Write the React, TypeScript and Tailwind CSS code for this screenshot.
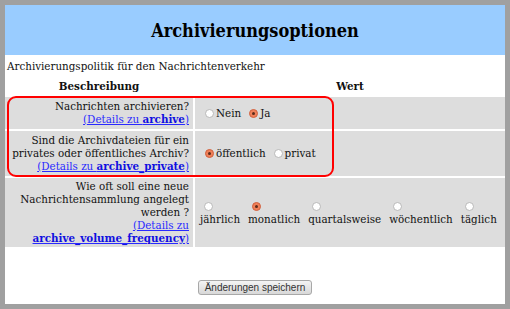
import React from 'react';

const serif = 'font-["DejaVu_Serif_Condensed","DejaVu_Serif",serif]';

function Radio({ checked }: { checked?: boolean }) {
  return checked ? (
    <span className="inline-flex h-[9px] w-[9px] items-center justify-center rounded-full border border-[#d0603e] bg-[#f08058] align-middle">
      <span className="h-[3px] w-[3px] rounded-full bg-[#5a2a1a]" />
    </span>
  ) : (
    <span className="inline-block h-[9px] w-[9px] rounded-full border border-[#b8b8b8] bg-white align-middle" />
  );
}

function Option({ label, checked }: { label: string; checked?: boolean }) {
  return (
    <span className="inline-flex items-center gap-[2px]">
      <Radio checked={checked} />
      <span>{label}</span>
    </span>
  );
}

const frequencies = [
  { label: 'jährlich', checked: false },
  { label: 'monatlich', checked: true },
  { label: 'quartalsweise', checked: false },
  { label: 'wöchentlich', checked: false },
  { label: 'täglich', checked: false },
];

export default function App() {
  return (
    <div className="h-[309px] w-[510px] bg-[#a0a0a0] p-[5px]">
      <div className={`relative h-[299px] w-[500px] bg-white text-[11.5px] leading-[13px] text-[#111] ${serif}`}>
        {/* Header */}
        <div className="flex h-[50px] items-center justify-center bg-[#99ccff]">
          <h1 className="text-[18px] font-bold text-black">Archivierungsoptionen</h1>
        </div>

        <p className="mt-[5px] pl-[2px]">Archivierungspolitik für den Nachrichtenverkehr</p>

        {/* Table */}
        <div className="mt-[5px] grid grid-cols-[188px_1fr] gap-[2px]">
          <div className="py-[2px] text-center font-bold">Beschreibung</div>
          <div className="py-[2px] text-center font-bold">Wert</div>

          <div className="bg-[#dddddd] py-[3px] pr-[4px] text-right">
            Nachrichten archivieren?
            <br />
            <a href="#" className="text-[#2a2aff] underline">
              (Details zu <b className="text-[#1010e0]">archive</b>)
            </a>
          </div>
          <div className="flex items-center gap-[8px] bg-[#dddddd] pl-[10px]">
            <Option label="Nein" />
            <Option label="Ja" checked />
          </div>

          <div className="bg-[#dddddd] py-[3px] pr-[4px] text-right">
            Sind die Archivdateien für ein
            <br />
            privates oder öffentliches Archiv?
            <br />
            <a href="#" className="text-[#2a2aff] underline">
              (Details zu <b className="text-[#1010e0]">archive_private</b>)
            </a>
          </div>
          <div className="flex items-center gap-[8px] bg-[#dddddd] pl-[10px]">
            <Option label="öffentlich" checked />
            <Option label="privat" />
          </div>

          <div className="bg-[#dddddd] py-[2px] pr-[4px] text-right">
            Wie oft soll eine neue
            <br />
            Nachrichtensammlung angelegt
            <br />
            werden ?
            <br />
            <a href="#" className="text-[#2a2aff] underline">
              (Details zu
              <br />
              <b className="text-[#1010e0]">archive_volume_frequency</b>)
            </a>
          </div>
          <div className="flex items-center gap-[8px] bg-[#dddddd] pl-[5px]">
            {frequencies.map((f) => (
              <span key={f.label} className="flex flex-col items-start">
                <span className="pl-[4px]">
                  <Radio checked={f.checked} />
                </span>
                <span>{f.label}</span>
              </span>
            ))}
          </div>
        </div>

        {/* Save */}
        <div className="mt-[33px] flex justify-center">
          <button className="h-[15px] rounded-[3px] border border-[#a8a8a8] bg-gradient-to-b from-[#f4f4f4] to-[#d8d8d8] px-[6px] font-['Liberation_Sans',sans-serif] text-[10px] leading-[13px] text-[#333]">
            Änderungen speichern
          </button>
        </div>

        {/* Highlight */}
        <div className="pointer-events-none absolute left-[2px] top-[91px] h-[81px] w-[327px] rounded-[9px] border-2 border-[#ff0000]" />
      </div>
    </div>
  );
}
